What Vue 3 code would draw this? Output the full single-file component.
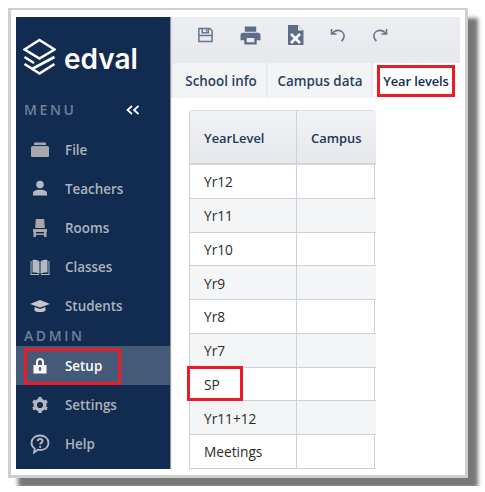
<template>
  <div class="frame">
    <div class="app">
      <aside class="sidebar">
        <div class="logo">
          <svg class="logo-mark" width="33" height="38" viewBox="0 0 33 38" fill="none" stroke="#fff" stroke-width="2.6" stroke-linejoin="miter">
            <path d="M16.5 2 L31.5 11.5 L16.5 20.5 L1.5 11.5 Z" />
            <path d="M1.5 19 L11 25 M31.5 19 L9 31" />
            <path d="M1.5 26 L16.5 35.5 L31.5 26" />
          </svg>
          <span class="logo-text">edval</span>
        </div>
        <div class="menu-head">
          <span class="section-label">MENU</span>
          <span class="collapse">
            <svg width="14" height="10" viewBox="0 0 14 10" fill="none" stroke="#fff" stroke-width="1.7">
              <path d="M6 1 L1.5 5 L6 9 M12.5 1 L8 5 L12.5 9" />
            </svg>
          </span>
        </div>
        <nav class="nav">
          <a class="nav-item">
            <svg class="nav-icon" viewBox="0 0 20 20" fill="#a6a8ad">
              <path d="M4 3.5 C4 3 4.5 2.5 5 2.5 H15 C15.5 2.5 16 3 16 3.5 V5 H4 Z" />
              <path d="M1 8 C1 6.8 1.8 6 3 6 H17 C18.2 6 19 6.8 19 8 V15.5 C19 16.5 18.3 17 17.5 17 H2.5 C1.7 17 1 16.5 1 15.5 Z" />
            </svg>
            <span>File</span>
          </a>
          <a class="nav-item">
            <svg class="nav-icon" viewBox="0 0 20 20" fill="#b5b8bf">
              <circle cx="10" cy="5.5" r="3.8" />
              <path d="M3 16.5 V14.5 C3 12 5.5 10.8 10 10.8 C14.5 10.8 17 12 17 14.5 V16.5 Z" />
            </svg>
            <span>Teachers</span>
          </a>
          <a class="nav-item">
            <svg class="nav-icon" viewBox="0 0 20 20" fill="#a6a8ad">
              <path d="M5.8 1 H14.2 L14.8 10 H5.2 Z" />
              <path d="M3 11 H17 V14 H3 Z" />
              <path d="M3.5 14 H6 V19 H3.5 Z M14 14 H16.5 V19 H14 Z M6 15.5 H14 V17 H6 Z" />
            </svg>
            <span>Rooms</span>
          </a>
          <a class="nav-item">
            <svg class="nav-icon" viewBox="0 0 20 20" fill="#b5b8bf">
              <path d="M2.5 3 C5 2.5 8 3 9.5 4.5 V17 C8 15.6 5 15.2 2.5 15.6 Z" />
              <path d="M17.5 3 C15 2.5 12 3 10.5 4.5 V17 C12 15.6 15 15.2 17.5 15.6 Z" />
              <path d="M0.5 4 H1.5 V17 H9 V18 H0.5 Z M19.5 4 H18.5 V17 H11 V18 H19.5 Z" />
            </svg>
            <span>Classes</span>
          </a>
          <a class="nav-item">
            <svg class="nav-icon" viewBox="0 0 20 20" fill="#c4c6ca">
              <path d="M10 4 L20 8 L10 11.5 L0 8 Z" />
              <path d="M4.5 11 L10 13 L15.5 11 V14.5 C13.5 16.5 6.5 16.5 4.5 14.5 Z" />
            </svg>
            <span>Students</span>
          </a>
          <div class="section-label admin">ADMIN</div>
          <a class="nav-item active">
            <svg class="nav-icon" viewBox="0 0 20 20" fill="#fff">
              <path fill-rule="evenodd" d="M6 9 V6 C6 3.5 7.6 2 10 2 C12.4 2 14 3.5 14 6 V9 H16.5 V17.5 H3.5 V9 Z M8 9 H12 V6 C12 4.7 11.2 4 10 4 C8.8 4 8 4.7 8 6 Z M10 11 A1.4 1.4 0 0 0 9.2 13.5 V15 H10.8 V13.5 A1.4 1.4 0 0 0 10 11 Z" />
            </svg>
            <span>Setup</span>
            <i class="callout callout-setup"></i>
          </a>
          <a class="nav-item">
            <svg class="nav-icon" viewBox="0 0 20 20" fill="none" stroke="#b5b8bf">
              <circle cx="10" cy="10" r="4.8" stroke-width="3.4" />
              <path d="M10 2 V4 M10 16 V18 M3 6 L4.8 7 M15.2 13 L17 14 M3 14 L4.8 13 M15.2 7 L17 6" stroke-width="3.4" />
            </svg>
            <span>Settings</span>
          </a>
          <a class="nav-item">
            <svg class="nav-icon" viewBox="0 0 20 20" fill="none" stroke="#b5b8bf" stroke-width="1.8">
              <path d="M10 1.5 C15 1.5 18.5 4.7 18.5 9 C18.5 13.3 15 16 10.5 16 C9.5 16 8.8 15.9 8 15.7 L4 18.5 L4.8 14.6 C2.7 13.3 1.5 11.3 1.5 9 C1.5 4.7 5 1.5 10 1.5 Z" />
              <path d="M7.6 7.2 C7.8 5.8 8.8 5 10.1 5 C11.5 5 12.5 5.9 12.5 7.1 C12.5 8.7 10.2 8.8 10.2 10.6" stroke-width="2" />
              <circle cx="10.2" cy="12.9" r="1.1" fill="#b5b8bf" stroke="none" />
            </svg>
            <span>Help</span>
          </a>
        </nav>
      </aside>

      <main class="main">
        <div class="top">
          <div class="toolbar">
            <svg width="17" height="18" viewBox="0 0 18 18" fill="none" stroke="#66758e" stroke-width="1.6">
              <path d="M2 2 H13.5 L16 4.5 V16 H2 Z" />
              <path d="M5.5 2 V6.5 H12 V2 M10 3.3 V5.2" />
              <path d="M2 9.5 H16" />
            </svg>
            <svg width="21" height="19" viewBox="0 0 22 20" fill="#5d6d88">
              <path fill-rule="evenodd" d="M5 0.5 H17 V6 H5 Z M3 7 H19 C20.6 7 21.5 8 21.5 9.5 V15 H17.5 V19.5 H4.5 V15 H0.5 V9.5 C0.5 8 1.4 7 3 7 Z M7 12.5 V17 H15 V12.5 Z" />
            </svg>
            <svg width="17" height="20" viewBox="0 0 17 20">
              <path fill="#5d6d88" d="M1 0 H11 L16.5 5.5 V20 H1 Z" />
              <path fill="#e8eaee" d="M11 0 L16.5 5.5 H11 Z" />
              <path stroke="#fff" stroke-width="2.6" d="M4 9 L13 18 M13 9 L4 18" />
            </svg>
            <svg width="16" height="14" viewBox="0 0 16 14" fill="none" stroke="#66758e" stroke-width="1.6">
              <path d="M1.5 1 V6 H6.5" />
              <path d="M2 6 C4 3 7 2 9.5 2.6 C12.5 3.4 14.5 6 14 9 C13.7 10.8 12.8 12 11.5 13" />
            </svg>
            <svg width="16" height="14" viewBox="0 0 16 14" fill="none" stroke="#66758e" stroke-width="1.6">
              <path d="M14.5 1 V6 H9.5" />
              <path d="M14 6 C12 3 9 2 6.5 2.6 C3.5 3.4 1.5 6 2 9 C2.3 10.8 3.2 12 4.5 13" />
            </svg>
          </div>
          <div class="tabs">
            <div class="tab">School info</div>
            <div class="tab">Campus data</div>
            <div class="tab tab-active">
              Year levels
              <i class="callout callout-tab"></i>
            </div>
          </div>
        </div>

        <div class="content">
          <div class="grid">
            <div class="cell head">YearLevel</div>
            <div class="cell head head-last">Campus</div>
            <template v-for="(row, i) in yearLevels" :key="row">
              <div class="cell first-col" :class="{ odd: i % 2 === 1 }">
                {{ row }}
                <i v-if="row === 'SP'" class="callout callout-sp"></i>
              </div>
              <div class="cell last-col" :class="{ odd: i % 2 === 1 }"></div>
            </template>
          </div>
        </div>
      </main>
    </div>
  </div>
</template>

<script setup>
const yearLevels = ['Yr12', 'Yr11', 'Yr10', 'Yr9', 'Yr8', 'Yr7', 'SP', 'Yr11+12', 'Meetings']
</script>

<style>
html, body {
  background: #fff;
}
</style>

<style scoped>
.frame {
  box-sizing: border-box;
  width: 460px;
  height: 470px;
  margin: 8px;
  padding: 7px 5px;
  background: #fff;
  border: 3px solid #cfcfcf;
  border-top-width: 2px;
  box-shadow: 10px 10px 4px #777;
  font-family: "Open Sans", "Noto Sans", sans-serif;
  font-size: 13.5px;
}
.app {
  display: flex;
  width: 444px;
  height: 452px;
  overflow: hidden;
}
.sidebar {
  width: 154px;
  flex: none;
  background: #122b50;
  box-shadow: 1px 0 1px #9a9a9a;
  z-index: 1;
}
.logo {
  display: flex;
  align-items: center;
  gap: 8px;
  padding: 21px 0 0 7px;
  height: 38px;
}
.logo-text {
  color: #fff;
  font-family: Inter, "Open Sans", sans-serif;
  font-size: 28px;
  font-weight: 600;
  line-height: 38px;
  margin-top: 4px;
}
.menu-head {
  display: flex;
  align-items: center;
  justify-content: space-between;
  height: 20px;
  margin-top: 24px;
  padding: 0 30px 0 8px;
}
.section-label {
  color: #6f8199;
  font-size: 14px;
  font-weight: 600;
  letter-spacing: 2.6px;
  line-height: 20px;
}
.collapse {
  display: flex;
}
.nav {
  margin-top: 10px;
}
.nav-item {
  position: relative;
  display: flex;
  align-items: center;
  height: 39px;
  padding-left: 14px;
  color: #adb3bd;
  font-weight: 600;
  font-size: 13.4px;
}
.nav-icon {
  width: 20px;
  height: 20px;
  margin-right: 15px;
  flex: none;
}
.admin {
  height: 20px;
  margin-top: 1px;
  padding-left: 8px;
}
.active {
  background: #445a78;
  color: #fff;
}
.callout {
  position: absolute;
  border: 3px solid #ed1c24;
  pointer-events: none;
}
.callout-setup {
  left: 8px;
  top: 2px;
  width: 91px;
  height: 31px;
}
.main {
  flex: 1;
  background: #fff;
}
.top {
  background: linear-gradient(#eceef2, #e2e4e9);
}
.toolbar {
  display: flex;
  align-items: center;
  gap: 26px;
  height: 36px;
  padding: 0 0 10px 27px;
}
.tabs {
  display: flex;
  gap: 2px;
  height: 35px;
  padding-left: 3px;
  background: #e8eaee;
}
.tab {
  position: relative;
  display: flex;
  align-items: center;
  justify-content: center;
  box-sizing: border-box;
  width: 93px;
  padding-left: 3px;
  background: #f3f4f6;
  border-radius: 2px 2px 0 0;
  color: #2b3f60;
  font-weight: 600;
  font-size: 13.4px;
}
.tab:nth-child(2) {
  width: 103px;
  padding-left: 1px;
}
.tab-active {
  flex: 1;
  padding: 0 7px 0 0;
  background: #fff;
  color: #122b50;
  font-size: 12.9px;
  letter-spacing: -0.1px;
}
.callout-tab {
  left: 4px;
  top: 2px;
  width: 72px;
  height: 26px;
}
.content {
  padding: 12px 0 0 19px;
}
.grid {
  display: grid;
  grid-template-columns: 107px 79px;
  grid-template-rows: 54px repeat(9, 33.75px);
  width: 186px;
  box-sizing: border-box;
  border-left: 1px solid #cdd1d8;
  border-right: 1px solid #cdd1d8;
  border-top: 1px solid #d9dbe0;
  border-radius: 3px 3px 0 0;
}
.cell {
  position: relative;
  display: flex;
  align-items: center;
  box-sizing: border-box;
  padding: 1px 0 0 14px;
  border-bottom: 1px solid #cdd1d8;
  color: #2a2a2a;
  font-size: 13.7px;
}
.first-col,
.head {
  border-right: 1px solid #cdd1d8;
}
.head-last {
  border-right: none;
}
.head {
  background: linear-gradient(#f1f2f5, #e6e8ec);
  border-bottom: 2px solid #d2d5da;
  color: #1e3558;
  font-weight: 600;
  font-size: 12.9px;
}
.odd {
  background: #f4f5f7;
}
.callout-sp {
  left: -3px;
  top: -2px;
  width: 50px;
  height: 29px;
}
</style>
